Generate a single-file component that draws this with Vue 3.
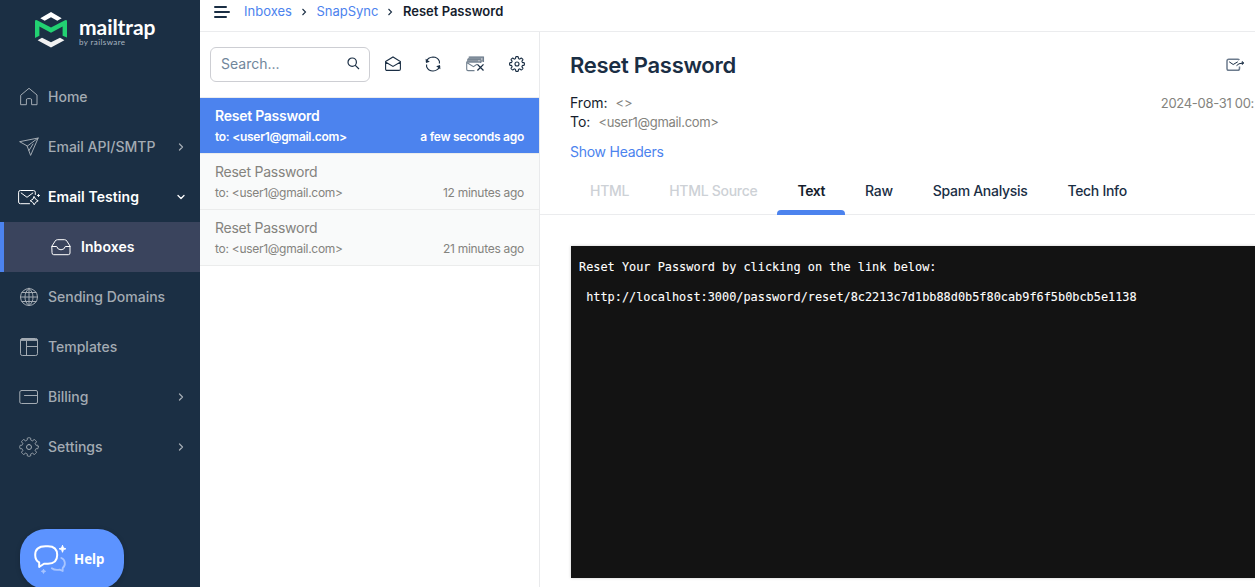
<script setup>
import { h } from 'vue'

// Eight-toothed cog outline with soft shoulders.
const gearPath =
  'M' +
  Array.from({ length: 160 }, (_, i) => {
    const a = (i / 160) * Math.PI * 2
    const r = 8.1 + 1.15 * Math.tanh(3.5 * (Math.cos(8 * a) + 0.15))
    return `${(10 + r * Math.cos(a)).toFixed(2)} ${(10 + r * Math.sin(a)).toFixed(2)}`
  }).join(' L') +
  ' Z'

const icons = {
  home: ['M2 8 L10 1.3 L18 8 V17.7 H12.6 V13 Q12.6 11.6 11.3 11.6 H8.7 Q7.4 11.6 7.4 13 V17.7 H2 Z'],
  send: ['M1 4.6 L19.2 1 L11.6 18.4 L8.2 9.2 Z', 'M8.2 9.2 L19.2 1', 'M10 13.5 L14 7'],
  globe: [
    'M10 1.5 A8.5 8.5 0 1 1 10 18.5 A8.5 8.5 0 1 1 10 1.5 Z',
    'M10 1.5 V18.5 M1.5 10 H18.5 M2.8 5.5 H17.2 M2.8 14.5 H17.2',
    'M10 1.5 C4.6 5 4.6 15 10 18.5 C15.4 15 15.4 5 10 1.5',
  ],
  templates: ['M3.3 1.5 H16.7 Q18.5 1.5 18.5 3.3 V16.7 Q18.5 18.5 16.7 18.5 H3.3 Q1.5 18.5 1.5 16.7 V3.3 Q1.5 1.5 3.3 1.5 Z', 'M2 2.5 H18 M1.7 3.4 H18.3 M7.5 4 V18.5 M7.5 9.5 H18.5'],
  billing: ['M2.5 3.5 H17 Q18.5 3.5 18.5 5 V15 Q18.5 16.5 17 16.5 H2.5 Q.8 16.5 .8 15 V5 Q.8 3.5 2.5 3.5 Z', 'M5.5 8.5 H18.5'],
  gear: [gearPath, 'M10 7.5 A2.5 2.5 0 1 1 10 12.5 A2.5 2.5 0 1 1 10 7.5 Z'],
  inbox: ['M1 9 L4.2 4 Q5 2.7 6.4 2.7 H13.6 Q15 2.7 15.8 4 L19 9 V16 Q19 17.7 17.3 17.7 H2.7 Q1 17.7 1 16 Z', 'M1 9.5 H5.7 Q6.6 12.8 10 12.8 Q13.4 12.8 14.3 9.5 H19'],
  testing: [
    'M11.5 16.7 H2.4 Q.6 16.7 .6 15 V5.2 Q.6 3.5 2.4 3.5 H15.3 Q17.3 3.5 17.3 5.2 V7.5',
    'M3.2 6 L9 10.3 L14.8 6',
    'M16.2 9.7 L17.7 12.3 L20.2 13.8 L17.7 15.3 L16.2 17.8 L14.7 15.3 L12.2 13.8 L14.7 12.3 Z',
    'M20.5 7.5 V9.5 M19.5 8.5 H21.5',
  ],
}

const Icon = (props) =>
  h(
    'svg',
    { viewBox: props.name === 'testing' ? '0 0 22 20' : '0 0 20 20', fill: 'none', stroke: 'currentColor', 'stroke-linejoin': 'round', 'stroke-linecap': 'round' },
    icons[props.name].map((d) => h('path', { d }))
  )
Icon.props = ['name']

const nav = [
  { label: 'Home', icon: 'home' },
  { label: 'Email API/SMTP', icon: 'send', arrow: 'right' },
  { label: 'Email Testing', icon: 'testing', arrow: 'down', open: true },
  { label: 'Inboxes', icon: 'inbox', active: true },
  { label: 'Sending Domains', icon: 'globe' },
  { label: 'Templates', icon: 'templates' },
  { label: 'Billing', icon: 'billing', arrow: 'right' },
  { label: 'Settings', icon: 'gear', arrow: 'right' },
]

const messages = [
  { time: 'a few seconds ago', selected: true },
  { time: '12 minutes ago' },
  { time: '21 minutes ago' },
]

const tabs = [
  { label: 'HTML', disabled: true },
  { label: 'HTML Source', disabled: true },
  { label: 'Text', current: true },
  { label: 'Raw' },
  { label: 'Spam Analysis' },
  { label: 'Tech Info' },
]

const body = `Reset Your Password by clicking on the link below:

 http://localhost:3000/password/reset/8c2213c7d1bb88d0b5f80cab9f6f5b0bcb5e1138`
</script>

<template>
  <div class="app">
    <aside class="sidebar">
      <div class="logo">
        <svg class="mark" width="32" height="36" viewBox="0 0 32 36">
          <path d="M5.3 6.3 L16 0 L26.7 6.3 L22.3 8.7 L16 5.2 L9.7 8.7 Z" fill="#fff" />
          <path d="M2.6 28.3 L7 25.8 L16 30.2 L25 25.8 L29.4 28.3 L16 35.6 Z" fill="#f1f1f1" />
          <path d="M0 9.4 Q0 7.4 2 8.2 L16 15.6 L30 8.2 Q32 7.4 32 9.4 V25.6 L27.6 23.7 V14.4 L16 20.7 L4.4 14.4 V23.7 L0 26 Z" fill="#22d172" />
        </svg>
        <div class="brand">
          <span class="brand-name">mailtrap</span>
          <span class="brand-by">by railsware</span>
        </div>
      </div>
      <nav>
        <a v-for="item in nav" :key="item.label" class="nav-item" :class="{ open: item.open, active: item.active }">
          <Icon :name="item.icon" class="nav-icon" :class="{ wide: item.icon === 'testing' }" />
          <span class="nav-label">{{ item.label }}</span>
          <svg v-if="item.arrow" class="arrow" :class="item.arrow" width="10" height="10" viewBox="0 0 10 10">
            <path d="M3.5 2 L6.5 5 L3.5 8" />
          </svg>
        </a>
      </nav>
      <button class="help">
        <svg width="34" height="30" viewBox="0 0 34 30" fill="none">
          <path d="M11.5 2.2 H14 C20 2.2 23.2 5 23.2 11 C23.2 17 20 19.7 14 19.7 L10 19.7 L5.2 23 V18.4 C2.4 17 1.2 14.5 1.2 11 C1.2 5 5 2.2 11.5 2.2 Z" stroke="#fff" stroke-width="2" stroke-linejoin="round" />
          <path d="M27.3 14 C31.5 15.5 32 21.5 28.7 24 V27 L25.6 25.6 C22.5 26.2 19.5 25.6 17.8 24.2" stroke="#a8c5ff" stroke-width="1.8" stroke-linecap="round" stroke-linejoin="round" />
          <path d="M28.5 1.3 L29.4 4 L31.9 4.8 L29.4 5.6 L28.5 8.3 L27.6 5.6 L25.1 4.8 L27.6 4 Z" fill="#fff" stroke="#fff" />
          <path d="M9.5 25.2 L10.1 26.7 L11.6 27.3 L10.1 27.9 L9.5 29.4 L8.9 27.9 L7.4 27.3 L8.9 26.7 Z" fill="#a8c5ff" stroke="#a8c5ff" />
        </svg>
        <span>Help</span>
      </button>
    </aside>

    <main>
      <header class="crumbs">
        <svg class="burger" width="16" height="12" viewBox="0 0 16 12">
          <path d="M1 1 H12 M1 6 H15 M1 11 H12" />
        </svg>
        <a>Inboxes</a>
        <svg class="sep" width="6" height="8" viewBox="0 0 6 8"><path d="M1.5 1 L4.5 4 L1.5 7" /></svg>
        <a>SnapSync</a>
        <svg class="sep" width="6" height="8" viewBox="0 0 6 8"><path d="M1.5 1 L4.5 4 L1.5 7" /></svg>
        <b>Reset Password</b>
      </header>

      <div class="panes">
        <section class="list">
          <div class="toolbar">
            <div class="search">
              <span>Search...</span>
              <svg width="13" height="13" viewBox="0 0 13 13"><path d="M5.2 1 A4.2 4.2 0 1 1 5.2 9.4 A4.2 4.2 0 1 1 5.2 1 Z M8.3 8.3 L12 12" /></svg>
            </div>
            <div class="tools">
              <svg width="16" height="16" viewBox="0 0 16 16"><path d="M.6 5.5 L8 1 L15.4 5.5 V13 Q15.4 14.4 14 14.4 H2 Q.6 14.4 .6 13 Z M.9 6.2 L8 10.4 L15.1 6.2" /></svg>
              <svg width="16" height="16" viewBox="0 0 16 16"><path d="M1.2 5.6 Q3 1.2 8 1 Q12.6 1 14.4 5.2 V7.6 M14.8 10.4 Q13 14.8 8 15 Q3.4 15 1.6 10.8 V8.4" /><path class="solid" d="M.6 2.8 L1 6.9 L4.8 5.8 Z M15.4 13.2 L15 9.1 L11.2 10.2 Z" /></svg>
              <svg class="purge" width="19" height="16" viewBox="0 0 19 16">
                <path class="shade" d="M3.5 .8 H17.4 V5 L15.6 6.5 H1 V3.5 Z" />
                <path class="line" d="M2.7 1 H17.5 V6 M1.6 3.2 H15 M8.5 14.6 H2 Q.7 14.6 .7 13.3 V6 H14.5 V7 M1.5 7 L7.5 10.7 L11 8.3" />
                <path class="cross" d="M11.4 8.4 L17.5 14.5 M17.5 8.4 L11.4 14.5" />
                <path class="glint" d="M12.5 4.7 H13.5 M15.3 3 H16.3" />
              </svg>
              <Icon name="gear" class="tool-gear" />
            </div>
          </div>
          <article v-for="m in messages" :key="m.time" class="message" :class="{ selected: m.selected }">
            <div class="subject">Reset Password</div>
            <div class="meta">
              <span class="to">to: &lt;user1@gmail.com&gt;</span>
              <span class="time">{{ m.time }}</span>
            </div>
          </article>
        </section>

        <section class="detail">
          <div class="title-row">
            <h1>Reset Password</h1>
            <svg class="forward" width="20" height="14" viewBox="0 0 20 14">
              <path class="frame" d="M13.5 8.5 V10.5 Q13.5 12.3 11.7 12.3 H2.8 Q1 12.3 1 10.5 V3 Q1 1.2 2.8 1.2 H11.7 Q12.8 1.2 13.3 2" />
              <path d="M3.2 3.8 L7.2 6.5 L11.8 3.8 M10.5 7.7 Q12 5.2 17.5 5 M16.2 3.6 L17.8 5 L16.2 6.4 Z" />
            </svg>
          </div>
          <div class="headers">
            <div>
              <div class="row from"><span class="key">From:</span><span class="val">&lt;&gt;</span></div>
              <div class="row"><span class="key">To:</span><span class="val">&lt;user1@gmail.com&gt;</span></div>
            </div>
            <span class="date">2024-08-31 00:</span>
          </div>
          <a class="show">Show Headers</a>
          <div class="tabs">
            <span v-for="t in tabs" :key="t.label" class="tab" :class="{ disabled: t.disabled, current: t.current }">{{ t.label }}</span>
          </div>
          <pre class="body">{{ body }}</pre>
        </section>
      </div>
    </main>
  </div>
</template>

<style>
body {
  margin: 0;
  overflow: hidden;
}
</style>

<style scoped>
.app {
  display: flex;
  width: 1255px;
  height: 587px;
  overflow: hidden;
  background: #fff;
  color: #1a2e44;
  font-family: Inter, 'Liberation Sans', sans-serif;
}
.sidebar {
  flex: none;
  display: flex;
  flex-direction: column;
  width: 200px;
  background: #1b2f44;
}
.logo {
  flex: none;
  box-sizing: border-box;
  display: flex;
  height: 72px;
  padding: 12px 0 0 35px;
  gap: 12px;
}
.brand {
  display: flex;
  flex-direction: column;
  padding-top: 3px;
}
.brand-name {
  color: #fff;
  font: 700 21px/24px Lato, sans-serif;
  letter-spacing: -0.05px;
}
.brand-by {
  margin-top: -2px;
  color: #a9b5c1;
  font: 400 8px/10px Lato, sans-serif;
  letter-spacing: 0.4px;
}
.nav-item {
  display: flex;
  align-items: center;
  height: 50px;
  padding: 0 14px 0 19px;
  color: #a3abb3;
  font-size: 14px;
  font-weight: 500;
}
.nav-icon {
  flex: none;
  width: 20px;
  height: 20px;
  margin-right: 9px;
}
.nav-icon.wide {
  width: 22px;
  margin: 0 8px 0 -1px;
}
.nav-label {
  flex: 1;
  padding-bottom: 1px;
}
.arrow {
  fill: none;
  stroke: currentColor;
  stroke-width: 1.3;
  stroke-linecap: round;
  stroke-linejoin: round;
}
.arrow.down {
  transform: rotate(90deg);
}
.nav-item.open,
.nav-item.active {
  color: #fff;
  font-weight: 600;
  letter-spacing: 0.08px;
}
.nav-item.active {
  padding-left: 51px;
  background: linear-gradient(#4c83ee, #4c83ee) 0 0 / 4px 100% no-repeat #3a445d;
}
.active .nav-icon {
  margin-right: 10px;
}
.help {
  display: flex;
  align-items: center;
  flex: none;
  width: 104px;
  height: 60px;
  margin: 57px 0 0 20px;
  padding: 0 0 0 14px;
  gap: 6px;
  border: 0;
  border-radius: 26px;
  background: #5c93ff;
  box-shadow: 0 1px 5px rgba(0, 0, 0, 0.18);
  color: #fff;
  font: 700 13.3px 'Noto Sans', sans-serif;
}
main {
  flex: 1;
  min-width: 0;
  display: flex;
  flex-direction: column;
}
.crumbs {
  display: flex;
  align-items: center;
  box-sizing: border-box;
  height: 32px;
  padding: 0 0 9px 14px;
  border-bottom: 1px solid #ebecee;
  font-size: 13px;
  line-height: 20px;
}
.crumbs a,
.show {
  color: #4c83ee;
}
.crumbs b {
  font-weight: 600;
  color: #151d2d;
}
.burger {
  margin: 1px 14px 0 0;
  fill: none;
  stroke: #1a2e44;
  stroke-width: 2;
  stroke-linecap: round;
}
.sep {
  margin: 1px 9.5px 0 9px;
  fill: none;
  stroke: #1a2e44;
  stroke-width: 1.1;
}
.panes {
  flex: 1;
  display: flex;
}
.list {
  flex: none;
  width: 339px;
  border-right: 1px solid #e9eaec;
}
.toolbar {
  display: flex;
  align-items: center;
  box-sizing: border-box;
  height: 66px;
  padding: 0 14px 1px 10px;
  border-bottom: 1px solid #ebecee;
}
.search {
  display: flex;
  align-items: center;
  justify-content: space-between;
  box-sizing: border-box;
  width: 160px;
  height: 35px;
  padding: 0 9px 1px 10px;
  border: 1px solid #cdced3;
  border-radius: 6px;
  color: #71869b;
  font-size: 14px;
}
.search svg,
.tools svg {
  fill: none;
  stroke: #1a2e44;
  stroke-width: 1.1;
}
.search svg {
  stroke-width: 1.2;
}
.tools {
  flex: 1;
  display: flex;
  align-items: center;
  justify-content: space-between;
  padding-left: 15px;
}
.tools .tool-gear {
  width: 16px;
  height: 16px;
  stroke-width: 1.4;
}
.tools .solid {
  fill: #1a2e44;
  stroke: none;
}
.tools .shade {
  fill: #8d97a2;
  stroke: none;
}
.tools .line {
  stroke: #71808f;
}
.tools .cross {
  stroke-width: 1.3;
}
.tools .glint {
  stroke: #fff;
}
.message {
  box-sizing: border-box;
  height: 56px;
  padding: 8px 15px 0;
  border-bottom: 1px solid #ebecec;
  background: #f9fafa;
  color: #84837e;
}
.message.selected {
  background: #4c83ee;
  background-clip: padding-box;
  color: #fff;
  font-weight: 600;
}
.subject {
  margin-bottom: 1px;
  font-size: 14px;
  line-height: 20px;
  letter-spacing: -0.25px;
}
.meta {
  display: flex;
  justify-content: space-between;
  font-size: 12px;
  line-height: 20px;
  letter-spacing: -0.28px;
}
.detail {
  flex: 1;
  min-width: 0;
  display: flex;
  flex-direction: column;
}
.title-row {
  display: flex;
  align-items: center;
  justify-content: space-between;
  height: 30px;
  margin: 18px 9px 0 30px;
}
h1 {
  margin: 0;
  font-size: 22px;
  font-weight: 600;
  letter-spacing: -0.28px;
}
.forward {
  fill: none;
  stroke: #1a2e44;
}
.forward .frame {
  stroke: #6c7b8d;
  stroke-width: 1.5;
}
.headers {
  display: flex;
  justify-content: space-between;
  margin: 13px 0 0 30px;
  line-height: 19px;
  font-size: 14px;
}
.row {
  display: flex;
  height: 19px;
  gap: 8px;
}
.row .key {
  color: #151d2d;
}
.val,
.date {
  color: #84837e;
  font-size: 13px;
  letter-spacing: -0.3px;
}
.date {
  white-space: nowrap;
  padding: 1px 1px 0 0;
}
.val {
  padding-top: 1px;
}
.show {
  margin: 11px 0 0 30px;
  font-size: 14px;
  line-height: 20px;
  letter-spacing: -0.26px;
}
.tabs {
  display: flex;
  box-sizing: border-box;
  height: 53px;
  padding-left: 30px;
  border-bottom: 1px solid #ebecee;
}
.tab {
  height: 53px;
  padding: 0 20px;
  font-size: 14px;
  font-weight: 500;
  line-height: 58px;
  letter-spacing: -0.3px;
  white-space: nowrap;
}
.tab.disabled {
  color: #cdd1d6;
  letter-spacing: -0.28px;
}
.tab.current {
  color: #151d2d;
  font-weight: 600;
  letter-spacing: -0.4px;
}
.tab.current::after {
  content: '';
  display: block;
  height: 5px;
  margin: -10px -20px 0;
  border-radius: 4px 4px 0 0;
  background: #4c83ee;
}
.body {
  flex: none;
  box-sizing: border-box;
  height: 332px;
  margin: 31px 0 0 31px;
  padding: 14px 8px;
  background: #131313;
  box-shadow: 0 0 3px rgba(0, 0, 0, 0.2);
  color: #fff;
  font: 11.88px/15px 'DejaVu Sans Mono', monospace;
  -webkit-text-stroke: 0.1px #fff;
}
</style>
